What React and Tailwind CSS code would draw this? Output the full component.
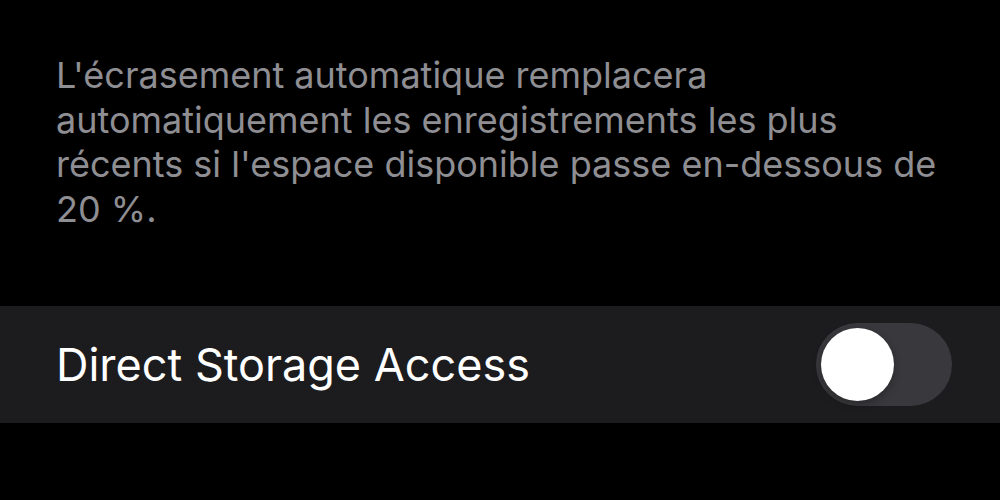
import { useState } from 'react';

const App = () => {
  const [enabled, setEnabled] = useState(false);

  return (
    <div className="min-h-[500px] w-[1000px] bg-black font-['Inter','Noto_Sans',sans-serif]">
      {/* Texte d'aide */}
      <div className="pl-[56px] pr-[40px] pt-[53px]">
        <p className="text-[36px] leading-[44.7px] text-[#8e8e93]">
          L'écrasement automatique remplacera
          <br />
          automatiquement les enregistrements les plus
          <br />
          récents si l'espace disponible passe en-dessous de
          <br />
          20 %.
        </p>
      </div>

      {/* Ligne réglage */}
      <div className="mt-[74px] h-[117px] bg-[#1c1c1e] flex items-center justify-between pl-[56px] pr-[48px]">
        <span className="text-[45px] text-white leading-none">Direct Storage Access</span>
        <button
          onClick={() => setEnabled(!enabled)}
          className={`relative w-[136px] h-[83px] rounded-full flex items-center px-[5px] ${
            enabled ? 'bg-[#34c759] justify-end' : 'bg-[#39393d] justify-start'
          }`}
        >
          <span className="w-[73px] h-[73px] rounded-full bg-white shadow-[0_3px_8px_rgba(0,0,0,0.3)]"></span>
        </button>
      </div>
    </div>
  );
};

export default App;
